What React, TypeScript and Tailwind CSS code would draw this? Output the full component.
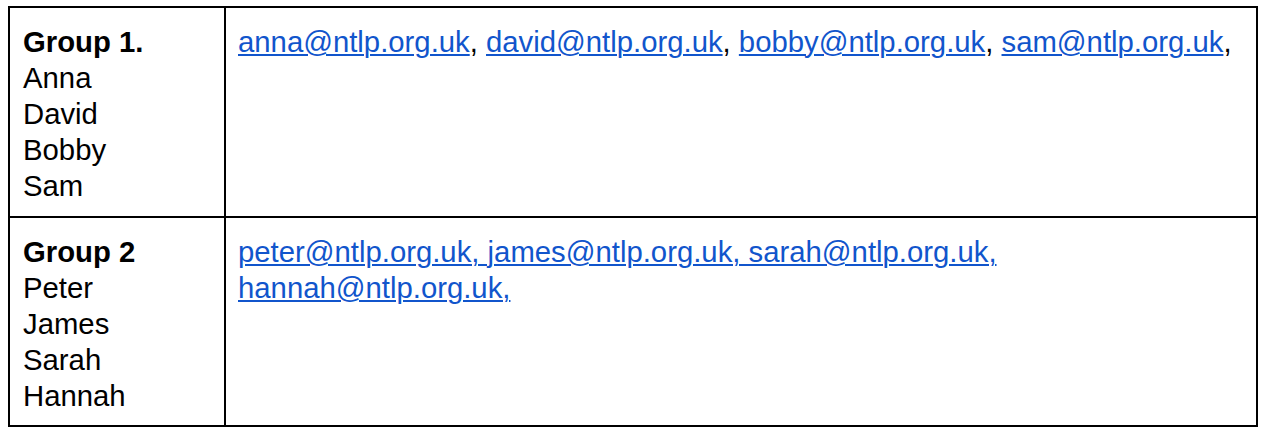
import React from "react";

const Link = ({ children }: { children: React.ReactNode }) => (
  <span className="text-[#1155cc] underline decoration-2 underline-offset-[2px]">{children}</span>
);

export default function App() {
  return (
    <div className="w-[1270px] h-[440px] bg-white pt-[6px] pl-[8px]" style={{ fontFamily: '"Liberation Sans", Arial, sans-serif' }}>
      <div className="w-[1250px] border-2 border-black text-[29.3px] leading-[36px] text-black">
        <div className="flex border-b-2 border-black">
          <div className="w-[216px] shrink-0 border-r-2 border-black pl-[13px] pt-[16px] pb-[12px]">
            <div className="font-bold">Group 1.</div>
            <div>Anna</div>
            <div>David</div>
            <div>Bobby</div>
            <div>Sam</div>
          </div>
          <div className="flex-1 pl-[12px] pr-[12px] pt-[16px] pb-[12px] whitespace-nowrap">
            <Link>anna@ntlp.org.uk</Link>, <Link>david@ntlp.org.uk</Link>, <Link>bobby@ntlp.org.uk</Link>, <Link>sam@ntlp.org.uk</Link>,
          </div>
        </div>
        <div className="flex">
          <div className="w-[216px] shrink-0 border-r-2 border-black pl-[13px] pt-[16px] pb-[11px]">
            <div className="font-bold">Group 2</div>
            <div>Peter</div>
            <div>James</div>
            <div>Sarah</div>
            <div>Hannah</div>
          </div>
          <div className="flex-1 pl-[12px] pr-[12px] pt-[16px] pb-[11px]">
            <Link>
              peter@ntlp.org.uk, james@ntlp.org.uk, sarah@ntlp.org.uk,
              <br />
              hannah@ntlp.org.uk,
            </Link>
          </div>
        </div>
      </div>
    </div>
  );
}
